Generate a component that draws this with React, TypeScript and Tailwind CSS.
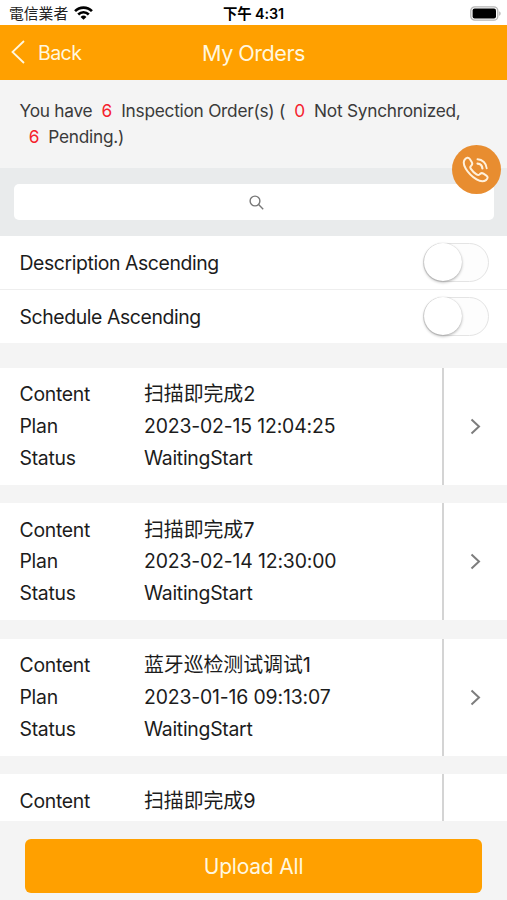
import { useState } from "react";

type Order = { content: string; plan?: string; status?: string };

const orders: Order[] = [
  { content: "扫描即完成2", plan: "2023-02-15 12:04:25", status: "WaitingStart" },
  { content: "扫描即完成7", plan: "2023-02-14 12:30:00", status: "WaitingStart" },
  { content: "蓝牙巡检测试调试1", plan: "2023-01-16 09:13:07", status: "WaitingStart" },
  { content: "扫描即完成9" },
];

function StatusBar() {
  return (
    <div className="grid h-[25px] shrink-0 grid-cols-3 items-center bg-white pl-[9px] pr-[6px] pt-[2px] text-black">
      <div className="flex items-center gap-[6px]">
        <span className="pt-px text-[14.8px] leading-none text-[#222]">電信業者</span>
        <svg width="19" height="14" viewBox="0 0 18 13" className="-mt-px" fill="none" stroke="currentColor" strokeWidth="2.5">
          <path d="M1 4.7a11.3 11.3 0 0 1 16 0" />
          <path d="M4 7.9a7.1 7.1 0 0 1 10 0" />
          <path d="M9 13 6.2 10.2a4 4 0 0 1 5.6 0Z" fill="currentColor" stroke="none" />
        </svg>
      </div>
      <span className="-ml-[3px] pt-px text-center text-[14.4px] font-semibold leading-none tracking-[-0.1px]">下午 4:31</span>
      <svg width="31" height="15" viewBox="0 0 31 15" className="-mt-px justify-self-end">
        <rect x="0.8" y="0.8" width="27" height="13.4" rx="4" fill="#fff" stroke="#b5b5b5" strokeWidth="1.3" />
        <rect x="2.6" y="2.6" width="23.4" height="9.8" rx="2" fill="#000" />
        <path d="M29.2 5.2v4.6c1.9-.8 1.9-3.8 0-4.6Z" fill="#b5b5b5" />
      </svg>
    </div>
  );
}

function Header() {
  return (
    <header className="grid h-[55px] shrink-0 grid-cols-3 items-center bg-[#ffa000] pt-px text-[#fff7df]">
      <button className="flex items-center gap-[13px] pl-[11px] text-[19.6px] tracking-[-0.6px]">
        <svg width="14" height="24" viewBox="0 0 14 24" className="-mt-px" fill="none" stroke="currentColor" strokeWidth="1.8">
          <path d="M13 1 1.5 12 13 23" />
        </svg>
        <span className="pt-[2px]">Back</span>
      </button>
      <h1 className="pt-px text-center text-[21.6px] tracking-[-0.5px]">My Orders</h1>
    </header>
  );
}

function Count({ value }: { value: number }) {
  return <span className="px-[9.2px] text-[#f5222d]">{value}</span>;
}

function SortRow({ label }: { label: string }) {
  const [on, setOn] = useState(false);

  return (
    <div className="flex h-[53.5px] items-center justify-between pl-[19.5px] pr-[18px]">
      <span className="pt-[3px] text-[19.4px] tracking-[-0.4px]">{label}</span>
      <button
        role="switch"
        aria-checked={on}
        aria-label={label}
        onClick={() => setOn(!on)}
        className={`flex h-[39px] w-[66px] items-center rounded-full border border-[#e4e4e4] ${on ? "justify-end bg-[#ffa000]" : "bg-[#fdfdfd]"}`}
      >
        <span className="size-[38px] rounded-full bg-white shadow-[0_1.5px_3px_rgba(0,0,0,0.28),0_0_1px_rgba(0,0,0,0.2)]" />
      </button>
    </div>
  );
}

function OrderCard({ order }: { order: Order }) {
  return (
    <div className="flex h-[117.4px] shrink-0 bg-white">
      <dl className="grid flex-1 grid-cols-[124.5px_1fr] content-start pl-[19.5px] pt-[11.5px] text-[19.4px] leading-[31.8px] tracking-[-0.28px]">
        <dt>Content</dt>
        <dd className="text-[19.9px] tracking-[-0.05px]">{order.content}</dd>
        {order.plan && (
          <>
            <dt>Plan</dt>
            <dd className="tracking-[-0.15px]">{order.plan}</dd>
          </>
        )}
        {order.status && (
          <>
            <dt>Status</dt>
            <dd>{order.status}</dd>
          </>
        )}
      </dl>
      <div className="flex w-[65px] items-center justify-center border-l-2 border-[#d4d4d4]">
        <svg width="11" height="17" viewBox="0 0 11 17" fill="none" stroke="#7d7d7d" strokeWidth="2">
          <path d="m1.5 1.5 7.5 7-7.5 7" />
        </svg>
      </div>
    </div>
  );
}

export default function App() {
  return (
    <div className="relative flex h-[900px] w-[507px] flex-col overflow-hidden bg-[#f4f4f4] font-['Inter','Noto_Sans_CJK_SC',sans-serif] text-[#1c1c1c]">
      <StatusBar />
      <Header />

      {/* Summary */}
      <p className="h-[88px] shrink-0 pl-[19.5px] pt-[18px] text-[17.3px] leading-[26px] tracking-[-0.26px] text-[#3a3a3a]">
        You have
        <Count value={6} />
        Inspection Order(s) (
        <Count value={0} />
        Not Synchronized,
        <br />
        <Count value={6} />
        Pending.)
      </p>

      {/* Search */}
      <div className="h-[68px] shrink-0 bg-[#e9ebec] pl-[14px] pr-[13px] pt-4">
        <div className="flex h-9 items-center justify-center rounded-[5px] bg-white pl-[4px]">
          <svg width="15" height="15" viewBox="0 0 15 15" fill="none" stroke="#777" strokeWidth="1.4">
            <circle cx="6" cy="6" r="4.9" />
            <path d="m9.6 9.6 4.6 4.6" />
          </svg>
        </div>
      </div>

      {/* Sorting */}
      <div className="shrink-0 divide-y divide-[#eee] bg-white">
        <SortRow label="Description Ascending" />
        <SortRow label="Schedule Ascending" />
      </div>

      {/* Orders */}
      <div className="flex min-h-0 flex-1 flex-col gap-[18.2px] overflow-hidden pt-[24.5px]">
        {orders.map((order) => (
          <OrderCard key={order.content} order={order} />
        ))}
      </div>

      <div className="h-[79px] shrink-0 px-[25px] pt-[18px]">
        <button className="h-[53.5px] w-full rounded-md bg-[#ffa000] pt-[2px] text-[21px] tracking-[-0.2px] text-[#fff7df]">
          Upload All
        </button>
      </div>

      {/* Floating call button */}
      <button
        aria-label="Call"
        className="absolute left-[452px] top-[145px] flex size-[49px] items-center justify-center rounded-full bg-[#e88d30] text-[#fff1dc]"
      >
        <svg width="28" height="28" viewBox="0 0 28 28" className="-ml-px" fill="none" stroke="currentColor" strokeWidth="2" strokeLinecap="round" strokeLinejoin="round">
          <path d="M2.7 3.6C4.3 1.5 6.5 1.1 7.8 3l1.9 3c1 1.7.6 2.9-.7 3.9-1.1.9-.9 1.8-.1 3 1.5 2.3 3.3 4 5.6 5.5 1.2.8 2.2.9 3.1-.1 1.1-1.3 2.3-1.6 3.9-.6l2.9 1.9c1.8 1.2 1.5 3-.4 4.5-2.6 2-6 1.4-9.4-.7C10.3 20.8 6.4 17 3.8 12.7 1.8 9.3 1 6 2.7 3.6Z" />
          <path d="M15.5 3.3c5 .2 8.9 4 9.2 8.9" strokeWidth="1.9" />
          <path d="M15.5 7.7c2.7.2 4.7 2.1 4.9 4.8" strokeWidth="2.2" />
        </svg>
      </button>
    </div>
  );
}
